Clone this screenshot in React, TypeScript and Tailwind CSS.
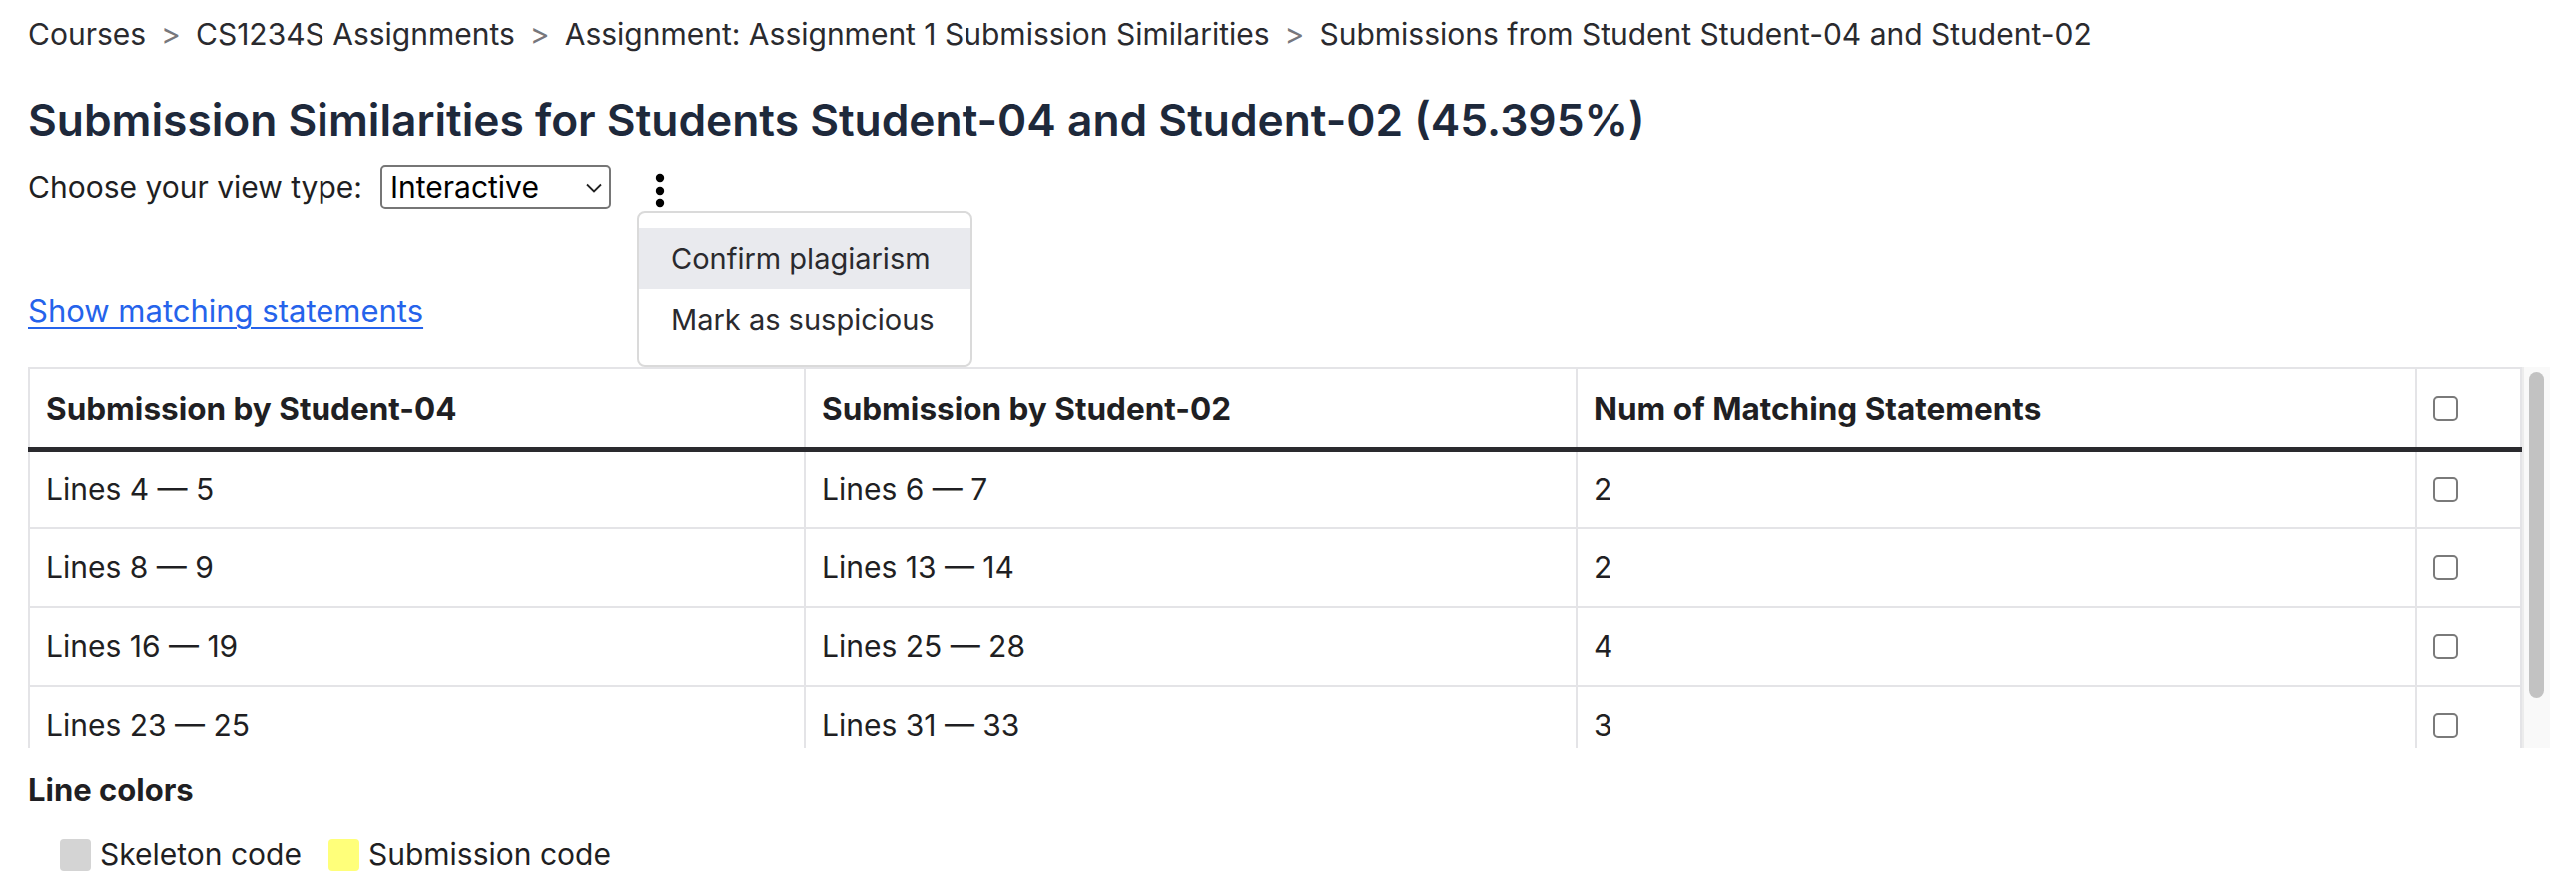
import { Fragment } from "react";

const crumbs = [
  "Courses",
  "CS1234S Assignments",
  "Assignment: Assignment 1 Submission Similarities",
  "Submissions from Student Student-04 and Student-02",
];

const rows = [
  { a: "Lines 4 — 5", b: "Lines 6 — 7", n: 2 },
  { a: "Lines 8 — 9", b: "Lines 13 — 14", n: 2 },
  { a: "Lines 16 — 19", b: "Lines 25 — 28", n: 4 },
  { a: "Lines 23 — 25", b: "Lines 31 — 33", n: 3 },
];

function Checkbox() {
  return (
    <input
      type="checkbox"
      className="block appearance-none w-[25px] h-[25px] border-2 border-[#7a7a7a] rounded-[5px] bg-white"
    />
  );
}

export default function App() {
  return (
    <div className="min-h-screen bg-white pl-[28px] pr-[26px] pt-[17px] font-['Inter','Noto_Sans',sans-serif] text-[30px] text-[#1f1f23]">
      {/* Breadcrumbs */}
      <nav className="flex items-center leading-[35px] text-[#2a2a2e]">
        {crumbs.map((c, i) => (
          <Fragment key={c}>
            {i > 0 && <span className="px-[15px] text-[#77777c]">&gt;</span>}
            <span>{c}</span>
          </Fragment>
        ))}
      </nav>

      <h1 className="mt-[42px] text-[44.3px] leading-[53px] font-semibold text-[#1e293b]">
        Submission Similarities for Students Student-04 and Student-02 (45.395%)
      </h1>

      {/* View type + actions */}
      <div className="mt-[18px] flex items-center h-[44px]">
        <span className="leading-[35px]">Choose your view type:</span>
        <div className="relative ml-[18px]">
          <select
            defaultValue="interactive"
            className="block appearance-none w-[231px] h-[44px] border-2 border-[#767676] rounded-[5px] bg-white pl-[8px] text-[30px] leading-[35px] text-black"
          >
            <option value="interactive">Interactive</option>
            <option value="side">Side by side</option>
          </select>
          <svg
            className="absolute right-[9px] top-[18px] pointer-events-none"
            width="16"
            height="10"
            viewBox="0 0 16 10"
            fill="none"
          >
            <path d="M1 1.5 L8 8.5 L15 1.5" stroke="#222" strokeWidth="1.8" />
          </svg>
        </div>
        <div className="relative ml-[44px] h-[44px]">
          <svg width="10" height="44" viewBox="0 0 10 44">
            <circle cx="5" cy="13" r="4.2" fill="#000" />
            <circle cx="5" cy="26" r="4.2" fill="#000" />
            <circle cx="5" cy="38" r="4.2" fill="#000" />
          </svg>
          <div className="absolute left-[-18px] top-[46px] z-10 w-[336px] border-2 border-[#dadada] rounded-[8px] bg-white py-[15px] text-[29px] leading-[35px] whitespace-nowrap text-[#2a2a2e]">
            <div className="flex items-center h-[61px] px-[32px] bg-[#e9eaee]">Confirm plagiarism</div>
            <div className="flex items-center h-[61px] px-[32px]">Mark as suspicious</div>
          </div>
        </div>
      </div>

      <a href="#" className="mt-[84px] block w-fit text-[31px] leading-[35px] text-[#2563eb] underline underline-offset-[5px] decoration-2">
        Show matching statements
      </a>

      {/* Matches table */}
      <div className="mt-[39px] flex h-[382px]">
        <div className="w-[2498px] overflow-hidden">
          <table className="w-[2496px] table-fixed border-collapse text-left">
            <colgroup>
              <col className="w-[777px]" />
              <col className="w-[773px]" />
              <col className="w-[841px]" />
              <col className="w-[105px]" />
            </colgroup>
            <thead>
              <tr className="h-[82px] text-[31.5px]">
                <th className="px-[16px] font-bold border-2 border-[#e4e4e7] border-b-[5px] border-b-[#2a2a2e]">Submission by Student-04</th>
                <th className="px-[16px] font-bold border-2 border-[#e4e4e7] border-b-[5px] border-b-[#2a2a2e]">Submission by Student-02</th>
                <th className="px-[16px] font-bold border-2 border-[#e4e4e7] border-b-[5px] border-b-[#2a2a2e]">Num of Matching Statements</th>
                <th className="px-[16px] border-2 border-[#e4e4e7] border-b-[5px] border-b-[#2a2a2e]">
                  <Checkbox />
                </th>
              </tr>
            </thead>
            <tbody>
              {rows.map((r) => (
                <tr key={r.a} className="h-[79px]">
                  <td className="px-[16px] border-2 border-[#e4e4e7]">{r.a}</td>
                  <td className="px-[16px] border-2 border-[#e4e4e7]">{r.b}</td>
                  <td className="px-[16px] border-2 border-[#e4e4e7]">{r.n}</td>
                  <td className="px-[16px] border-2 border-[#e4e4e7]">
                    <Checkbox />
                  </td>
                </tr>
              ))}
            </tbody>
          </table>
        </div>
        <div className="w-[28px] h-full bg-[#f9f9f9] border-l-2 border-[#ececec]">
          <div className="mt-[5px] ml-[5px] w-[15px] h-[327px] rounded-full bg-[#c2c2c2]" />
        </div>
      </div>

      {/* Legend */}
      <h3 className="mt-[24px] text-[31px] font-bold leading-[35px]">Line colors</h3>
      <div className="mt-[30px] pl-[32px] flex items-center leading-[35px]">
        <span className="w-[31px] h-[32px] rounded-[4px] bg-[#d4d4d4]" />
        <span className="ml-[9px]">Skeleton code</span>
        <span className="ml-[27px] w-[31px] h-[32px] rounded-[4px] bg-[#ffff7a]" />
        <span className="ml-[9px]">Submission code</span>
      </div>
    </div>
  );
}
